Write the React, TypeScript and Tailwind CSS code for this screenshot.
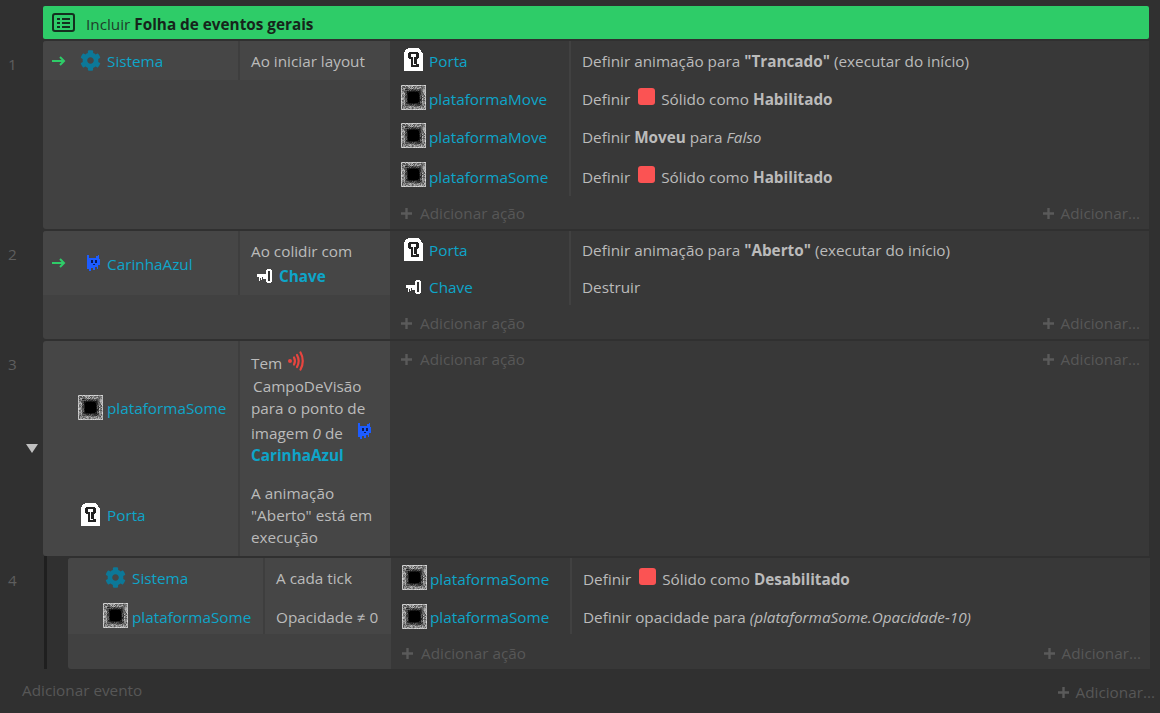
import React from "react";
import { FaCog } from "react-icons/fa";

const FONT = { fontFamily: '"Open Sans", "Noto Sans", sans-serif' };

function rnd(i: number) {
  const x = Math.sin(i * 12.9898) * 43758.5453;
  return x - Math.floor(x);
}

function Platform() {
  const cells: React.ReactNode[] = [];
  const n = 25;
  for (let y = 0; y < n; y++) {
    for (let x = 0; x < n; x++) {
      const d = Math.max(Math.abs(x - 12), Math.abs(y - 12));
      const corner = Math.abs(x - 12) + Math.abs(y - 12);
      let v: number;
      if (d >= 12) v = 170 + rnd(x * 31 + y) * 50;
      else if (d <= 5 && corner <= 9) v = 0;
      else if (d <= 6) v = 10 + rnd(x * 17 + y * 3) * 30;
      else if (d <= 8) v = 30 + rnd(x * 7 + y * 29) * 80;
      else v = 70 + rnd(x * 13 + y * 37) * 120;
      const c = Math.round(v);
      cells.push(<rect key={x + "-" + y} x={x} y={y} width="1" height="1" fill={`rgb(${c},${c},${c})`} />);
    }
  }
  return (
    <svg width="25" height="25" viewBox="0 0 25 25" shapeRendering="crispEdges" className="shrink-0">
      {cells}
    </svg>
  );
}

function Door() {
  return (
    <svg width="19" height="23" viewBox="0 0 19 23" shapeRendering="crispEdges" className="shrink-0">
      <path fill="#fff" d="M4 0h11v1h1v1h1v2h1v1h1v18H0V4h1V2h1V1h2z" />
      <path fill="#222" d="M5 4h9v1h1v5h-1v1h-1v5h2v3H7v-8H5v-1H4V5h1z" />
      <path fill="#fff" d="M7 6h5v3H10v7h2v1H9V9H7z" />
    </svg>
  );
}

function Key() {
  return (
    <svg width="16" height="16" viewBox="0 0 16 16" shapeRendering="crispEdges" className="shrink-0">
      <path fill="#fff" d="M10 1h4v1h1v12h-1v1h-4v-1H9v-3H6V9H5v3H4v-2H3v3H2V9H0V6h9V2h1z" />
      <path fill="#333" d="M11 3h2v10h-2z" />
    </svg>
  );
}

function Face() {
  return (
    <svg width="14" height="17" viewBox="0 0 14 17" shapeRendering="crispEdges" className="shrink-0">
      <path fill="#1d5cff" d="M1 0h2v3h7V1h2V0h1v4h1v6h-2v4h-1v-2H9v3H7v-2H5v3H3v-2H1z" />
      <path fill="#0b1a55" d="M5 5h2v3H5zM9 5h2v3H9zM7 9h2v1H7z" />
    </svg>
  );
}

function Signal() {
  return (
    <svg width="18" height="20" viewBox="0 0 18 20" fill="none" stroke="#e8453f" strokeWidth="2.2" strokeLinecap="round" className="shrink-0 -mt-[4px]">
      <circle cx="3" cy="10" r="2" fill="#e8453f" stroke="none" />
      <path d="M7 6.500c1.200 2.200 1.200 4.800 0 7" />
      <path d="M10 4c2 3.600 2 8.400 0 12" />
      <path d="M13.500 1.500c3 5 3 12 0 17" />
    </svg>
  );
}

function Gear() {
  return <FaCog size={21} color="#0c7898" className="shrink-0" />;
}

function Solid() {
  return <span className="inline-block w-[17px] h-[17px] rounded-[3px] bg-[#fb5353] ml-[8px] mr-[6px] align-[0px]" />;
}

function Plus() {
  return (
    <svg width="11" height="11" viewBox="0 0 11 11" className="shrink-0 fill-[#5a5a5a]">
      <path d="M4.300 0h2.400v4.300H11v2.400H6.700V11H4.300V6.700H0V4.300h4.300z" />
    </svg>
  );
}

function Name({ children, bold, className = "" }: { children: React.ReactNode; bold?: boolean; className?: string }) {
  return <span className={`text-[#0ea5c9] ${bold ? "font-bold" : ""} ${className}`}>{children}</span>;
}

function ActionRow({ icon, name, h, pt, iconCls = "", children }: { icon: React.ReactNode; name: string; h: string; pt: string; iconCls?: string; children: React.ReactNode }) {
  return (
    <div className={`flex items-center ${h}`}>
      <div className="w-[181px] shrink-0 flex items-center h-full border-r-2 border-[#414141] pl-[10px]">
        <div className={`w-[27px] flex justify-center shrink-0 ${iconCls}`}>{icon}</div>
        <Name className={`ml-[2px] ${pt}`}>{name}</Name>
      </div>
      <div className={`pl-[11px] text-[#bbbbbb] whitespace-pre ${pt}`}>{children}</div>
    </div>
  );
}

function AddBar({ pt }: { pt: string }) {
  return (
    <div className={`flex-1 flex items-center justify-between pl-[11px] pr-[9px] text-[#575757] ${pt}`}>
      <span className="flex items-center gap-[8px]"><Plus />Adicionar ação</span>
      <span className="flex items-center gap-[7px]"><Plus />Adicionar...</span>
    </div>
  );
}

function Obj({ icon, name, pl = "pl-[33px]", ipt, npt }: { icon: React.ReactNode; name: string; pl?: string; ipt: string; npt: string }) {
  return (
    <div className={`flex items-center ${pl}`}>
      <div className={`w-[29px] flex justify-center shrink-0 ${ipt}`}>{icon}</div>
      <Name className={`ml-[2px] ${npt}`}>{name}</Name>
    </div>
  );
}

function Arrow() {
  return (
    <svg width="14" height="10" viewBox="0 0 14 10" fill="none" stroke="#2ecc68" strokeWidth="2" className="absolute left-[9px]">
      <path d="M0 5h12M8 1l4 4-4 4" />
    </svg>
  );
}

export default function App() {
  return (
    <div style={FONT} className="w-[1160px] h-[713px] bg-[#303030] overflow-hidden text-[15.3px] pt-[6px] relative">
      <div className="ml-[43px] w-[1106px] h-[33px] rounded-[2px] bg-[#2ecc68] flex items-center pl-[9px] text-[#1f3d2a]">
        <svg width="23" height="19" viewBox="0 0 23 19" fill="none" stroke="#14301f" strokeWidth="2" className="mr-[11px]">
          <rect x="1" y="1" width="21" height="17" rx="2" />
          <path d="M5 6h3M10 6h8M5 10h3M10 10h8M5 14h3M10 14h8" />
        </svg>
        <span className="pt-[3px]">Incluir <b className="text-[#16241b]">Folha de eventos gerais</b></span>
      </div>

      {/* Event 1 */}
      <div className="flex mt-[2px] h-[188px]">
        <div className="w-[43px] shrink-0 pl-[8px] pt-[12px] text-[#5e5e5e]">1</div>
        <div className="w-[347px] shrink-0 bg-[#414141] rounded-l-[3px]">
          <div className="h-[39px] bg-[#464646] relative flex items-center rounded-tl-[3px]">
            <Arrow />
            <div className="w-[197px] h-full flex items-center border-r-2 border-[#3e3e3e] pl-[37px] gap-[6px]">
              <Gear /><Name className="pt-[2px]">Sistema</Name>
            </div>
            <div className="pl-[11px] pt-[2px] text-[#bbbbbb]">Ao iniciar layout</div>
          </div>
        </div>
        <div className="w-[759px] shrink-0 bg-[#383838] flex flex-col">
          <ActionRow h="h-[39px]" pt="pt-[2px]" iconCls="mb-[2px]" icon={<Door />} name="Porta">Definir animação para <b>"Trancado"</b> (executar do início)</ActionRow>
          <ActionRow h="h-[38px]" pt="pt-[1px]" iconCls="mb-[4px]" icon={<Platform />} name="plataformaMove">Definir<Solid />Sólido como <b>Habilitado</b></ActionRow>
          <ActionRow h="h-[39px]" pt="pt-[0px]" iconCls="mb-[4px]" icon={<Platform />} name="plataformaMove">Definir <b>Moveu</b> para <i>Falso</i></ActionRow>
          <ActionRow h="h-[39px]" pt="pt-[1px]" iconCls="mb-[4px]" icon={<Platform />} name="plataformaSome">Definir<Solid />Sólido como <b>Habilitado</b></ActionRow>
          <AddBar pt="pt-[1px]" />
        </div>
      </div>

      {/* Event 2 */}
      <div className="flex mt-[2px] h-[108px]">
        <div className="w-[43px] shrink-0 pl-[8px] pt-[12px] text-[#5e5e5e]">2</div>
        <div className="w-[347px] shrink-0 bg-[#414141] rounded-l-[3px]">
          <div className="h-[64px] bg-[#464646] relative flex items-center rounded-tl-[3px]">
            <Arrow />
            <div className="w-[197px] h-full flex items-center border-r-2 border-[#3e3e3e] pl-[43px] gap-[7px]">
              <Face /><Name className="pt-[3px]">CarinhaAzul</Name>
            </div>
            <div className="pl-[11px] text-[#bbbbbb] leading-[24px]">
              <div>Ao colidir com</div>
              <div className="flex items-center pl-[6px] gap-[6px] mt-[1px]"><Key /><Name bold>Chave</Name></div>
            </div>
          </div>
        </div>
        <div className="w-[759px] shrink-0 bg-[#383838] flex flex-col">
          <ActionRow h="h-[38px]" pt="pt-[1px]" iconCls="mb-[2px]" icon={<Door />} name="Porta">Definir animação para <b>"Aberto"</b> (executar do início)</ActionRow>
          <ActionRow h="h-[36px]" pt="pt-[1px]" icon={<Key />} name="Chave">Destruir</ActionRow>
          <AddBar pt="pt-[2px]" />
        </div>
      </div>

      {/* Event 3 */}
      <div className="flex mt-[2px] h-[215px]">
        <div className="w-[43px] shrink-0 flex flex-col pl-[8px] pt-[12px] text-[#5e5e5e]">
          <div>3</div>
          <div className="w-0 h-0 ml-[18px] mt-[68px] border-l-[6px] border-r-[6px] border-t-[9px] border-l-transparent border-r-transparent border-t-[#c0c0c0]" />
        </div>
        <div className="w-[347px] shrink-0 bg-[#464646] rounded-l-[3px] flex flex-col">
          <div className="flex h-[130px]">
            <div className="w-[197px] shrink-0 flex items-center border-r-2 border-[#3e3e3e]">
              <Obj ipt="pt-[3px]" npt="pt-[5px]" icon={<Platform />} name="plataformaSome" />
            </div>
            <div className="flex-1 pl-[11px] text-[#bbbbbb] leading-[22.5px] pt-[11px]">
              <div className="flex items-center gap-[5px]">Tem <Signal /></div>
              <div className="pl-[2px]">CampoDeVisão</div>
              <div>para o ponto de</div>
              <div className="flex items-center mt-[2px]">imagem&nbsp;<i>0</i>&nbsp;de<span className="ml-[14px] -mt-[2px]"><Face /></span></div>
              <div><Name bold>CarinhaAzul</Name></div>
            </div>
          </div>
          <div className="flex h-[85px]">
            <div className="w-[197px] shrink-0 flex items-center border-r-2 border-[#3e3e3e]">
              <Obj ipt="pt-[2px]" npt="pt-[3px]" icon={<Door />} name="Porta" />
            </div>
            <div className="flex-1 pl-[11px] text-[#bbbbbb] pt-[11px] leading-[22px]">A animação<br />"Aberto" está em<br />execução</div>
          </div>
        </div>
        <div className="w-[759px] shrink-0 bg-[#383838] flex flex-col">
          <div className="h-[36px] flex"><AddBar pt="pt-[0px]" /></div>
        </div>
      </div>

      {/* Event 4 */}
      <div className="flex mt-[2px] h-[111px]">
        <div className="w-[43px] shrink-0 pl-[8px] pt-[11px] text-[#5e5e5e] relative">4</div>
        <div className="w-[25px] shrink-0 -mt-[2px]">
          <div className="ml-[1px] w-[3px] h-[113px] bg-[#1f1f1f]" />
        </div>
        <div className="w-[323px] shrink-0 bg-[#414141] rounded-l-[3px]">
          <div className="bg-[#464646] rounded-tl-[3px]">
            <div className="flex h-[38px] items-center">
              <div className="w-[197px] h-full flex items-center border-r-2 border-[#3e3e3e] pl-[33px]">
                <div className="w-[29px] flex justify-center shrink-0"><Gear /></div><Name className="ml-[2px] pt-[3px]">Sistema</Name>
              </div>
              <div className="pl-[11px] pt-[3px] text-[#bbbbbb]">A cada tick</div>
            </div>
            <div className="flex h-[38px] items-center">
              <div className="w-[197px] h-full flex items-center border-r-2 border-[#3e3e3e] pl-[33px]">
                <div className="w-[29px] flex justify-center shrink-0"><Platform /></div><Name className="ml-[2px] pt-[4px]">plataformaSome</Name>
              </div>
              <div className="pl-[11px] pt-[4px] text-[#bbbbbb]">Opacidade ≠ 0</div>
            </div>
          </div>
        </div>
        <div className="w-[759px] shrink-0 bg-[#383838] flex flex-col">
          <ActionRow h="h-[38px]" pt="pt-[4px]" icon={<Platform />} name="plataformaSome">Definir<Solid />Sólido como <b>Desabilitado</b></ActionRow>
          <ActionRow h="h-[38px]" pt="pt-[5px]" iconCls="mt-[3px]" icon={<Platform />} name="plataformaSome">Definir opacidade para <i>(plataformaSome.Opacidade-10)</i></ActionRow>
          <AddBar pt="pt-[3px]" />
        </div>
      </div>

      {/* Footer */}
      <div className="flex justify-between pl-[22px] pr-[5px] text-[#575757] mt-[10px]">
        <span>Adicionar evento</span>
        <span className="flex items-center gap-[7px] mt-[2px]"><Plus />Adicionar...</span>
      </div>
    </div>
  );
}
